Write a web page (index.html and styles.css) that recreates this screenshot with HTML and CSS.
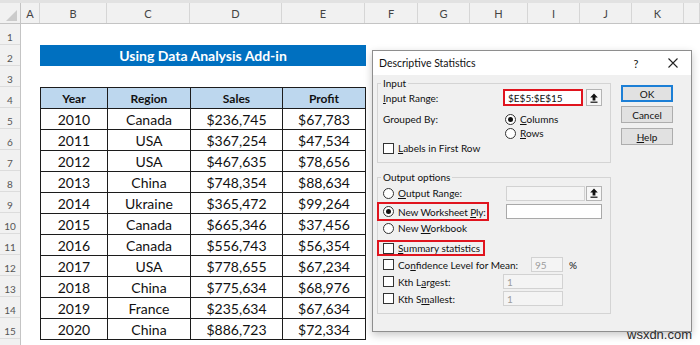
FILE: index.html
```html
<!DOCTYPE html>
<html lang="en">
<head>
  <meta charset="UTF-8">
  <title>Descriptive Statistics</title>
  <link rel="stylesheet" href="styles.css">
</head>
<body>

<div class="topstrip"></div>
<div class="colhead">
  <div class="corner"><span class="tri"></span></div>
  <div>A</div><div>B</div><div>C</div><div>D</div><div>E</div><div>F</div>
  <div>G</div><div>H</div><div>I</div><div>J</div><div>K</div><div></div>
</div>

<div class="sheet">
  <div class="rownums">
    <div>1</div><div>2</div><div>3</div><div>4</div><div>5</div><div>6</div><div>7</div><div>8</div>
    <div>9</div><div>10</div><div>11</div><div>12</div><div>13</div><div>14</div><div>15</div><div></div>
  </div>
  <div class="cells">
    <div class="spacer"></div>
    <div class="banner">Using Data Analysis Add-in</div>
    <div class="spacer"></div>
    <div class="data">
      <div class="th">Year</div><div class="th">Region</div><div class="th">Sales</div><div class="th">Profit</div>
      <div>2010</div><div>Canada</div><div>$236,745</div><div>$67,783</div>
      <div>2011</div><div>USA</div><div>$367,254</div><div>$47,534</div>
      <div>2012</div><div>USA</div><div>$467,635</div><div>$78,656</div>
      <div>2013</div><div>China</div><div>$748,354</div><div>$88,634</div>
      <div>2014</div><div>Ukraine</div><div>$365,472</div><div>$99,264</div>
      <div>2015</div><div>Canada</div><div>$665,346</div><div>$37,456</div>
      <div>2016</div><div>Canada</div><div>$556,743</div><div>$56,354</div>
      <div>2017</div><div>USA</div><div>$778,655</div><div>$67,234</div>
      <div>2018</div><div>China</div><div>$775,634</div><div>$68,976</div>
      <div>2019</div><div>France</div><div>$235,634</div><div>$67,634</div>
      <div>2020</div><div>China</div><div>$886,723</div><div>$72,334</div>
    </div>
  </div>
</div>

<div class="dialog">
  <div class="titlebar">
    <span class="title">Descriptive Statistics</span>
    <span class="help-q">?</span>
    <svg class="close" width="10" height="10" viewBox="0 0 10 10"><path d="M0.5 0.5L9.5 9.5M9.5 0.5L0.5 9.5" stroke="#222" stroke-width="1.1" fill="none"/></svg>
  </div>
  <div class="dlg-body">
    <div class="groups">
      <fieldset class="grp grp-input">
        <legend>Input</legend>
        <div class="line range">
          <span class="lbl w-range"><u>I</u>nput Range:</span>
          <span class="field ref">$E$5:$E$15</span>
          <span class="pick"><svg width="8" height="10" viewBox="0 0 8 10"><path d="M4 0.5L7.8 4.6H5.4V7.4H2.6V4.6H0.2Z" fill="#111"/><rect x="0.5" y="8.6" width="7" height="1.2" fill="#111"/></svg></span>
        </div>
        <div class="line grouped">
          <span class="lbl w-grouped">Grouped By:</span>
          <div class="radios">
            <div class="opt"><span class="radio on"></span><span><u>C</u>olumns</span></div>
            <div class="opt"><span class="radio"></span><span><u>R</u>ows</span></div>
          </div>
        </div>
        <div class="line first-row">
          <span class="check"></span><span><u>L</u>abels in First Row</span>
        </div>
      </fieldset>

      <fieldset class="grp grp-output">
        <legend>Output options</legend>
        <div class="line r-out">
          <span class="lbl w-out"><span class="radio"></span><span><u>O</u>utput Range:</span></span>
          <span class="field off w-outfield"></span>
          <span class="pick pick-out"><svg width="8" height="10" viewBox="0 0 8 10"><path d="M4 0.5L7.8 4.6H5.4V7.4H2.6V4.6H0.2Z" fill="#111"/><rect x="0.5" y="8.6" width="7" height="1.2" fill="#111"/></svg></span>
        </div>
        <div class="line r-ply">
          <span class="mark mark-ply"><span class="radio on"></span><span>New Worksheet <u>P</u>ly:</span></span>
          <span class="field w-ply"></span>
        </div>
        <div class="line r-book">
          <span class="radio"></span><span>New <u>W</u>orkbook</span>
        </div>
        <div class="line r-sum">
          <span class="mark mark-sum"><span class="check"></span><span><u>S</u>ummary statistics</span></span>
        </div>
        <div class="line r-conf">
          <span class="lbl w-conf"><span class="check"></span><span>Co<u>n</u>fidence Level for Mean:</span></span>
          <span class="field off w-small">95</span>
          <span class="pct">%</span>
        </div>
        <div class="line r-kth">
          <span class="lbl w-kth"><span class="check"></span><span>Kth L<u>a</u>rgest:</span></span>
          <span class="field off w-kthfield">1</span>
        </div>
        <div class="line r-kth">
          <span class="lbl w-kth"><span class="check"></span><span>Kth S<u>m</u>allest:</span></span>
          <span class="field off w-kthfield">1</span>
        </div>
      </fieldset>
    </div>

    <div class="buttons">
      <button class="btn default">OK</button>
      <button class="btn">Cancel</button>
      <button class="btn btn-help"><u>H</u>elp</button>
    </div>
  </div>
</div>

<div class="watermark">wsxdn.com</div>

</body>
</html>
```

FILE: styles.css
```css
body { margin: 0; width: 700px; height: 345px; overflow: hidden; position: relative; background: #fff; font-family: Lato, "Liberation Sans", sans-serif; color: #000; }

/* sheet frame */
.topstrip { height: 3px; background: #e2e2e2; }
.colhead { display: grid; grid-template-columns: 21px 19px 67px 83px 92px 83px 53px 52px 58px 52px 52px 52px 1fr; height: 21px; box-sizing: border-box; background: #f1f1f1; border-bottom: 1px solid #c4c4c4; }
.colhead > div { display: flex; align-items: center; justify-content: center; border-right: 1px solid #d6d6d6; color: #444; font-size: 11px; }
.colhead .corner { align-items: flex-end; justify-content: flex-end; padding: 0 3px 2px 0; border-right-color: #c4c4c4; }
.tri { width: 0; height: 0; border-left: 11px solid transparent; border-bottom: 11px solid #cbcbcb; }
.sheet { display: flex; }
.rownums { width: 21px; flex: none; background: #f1f1f1; border-right: 1px solid #c4c4c4; box-sizing: border-box; }
.rownums div { height: 21px; box-sizing: border-box; border-bottom: 1px solid #dcdcdc; padding-top: 7px; line-height: 12px; font-size: 10px; color: #555; text-align: center; }
.cells { padding-left: 19px; }
.spacer { height: 21px; }
.banner { width: 326px; height: 21px; display: flex; align-items: center; justify-content: center; background: #0070c0; color: #fff; font-weight: 700; font-size: 14px; }
.data { display: grid; grid-template-columns: 67px 83px 92px 83px; width: 326px; box-sizing: border-box; border-left: 1px solid #1c1c1c; border-top: 1px solid #1c1c1c; }
.data > div { height: 21px; box-sizing: border-box; display: flex; align-items: center; justify-content: center; border-right: 1px solid #1c1c1c; border-bottom: 1px solid #1c1c1c; font-size: 14px; color: #111; }
.data .th { background: #bdd7ee; font-weight: 700; font-size: 12px; }

/* dialog */
.dialog { position: absolute; left: 372px; top: 50px; width: 320px; height: 282px; box-sizing: border-box; border: 1px solid #8e8e8e; background: #f0f0f0; box-shadow: 0 3px 8px rgba(0,0,0,.22); font-size: 10px; color: #111; white-space: nowrap; }
.titlebar { height: 24px; display: flex; align-items: center; padding-left: 6px; background: #fff; font-size: 10.5px; }
.help-q { margin-left: auto; width: 10px; text-align: center; font-size: 11px; }
.close { margin-left: 27px; margin-right: 13px; }
.dlg-body { display: flex; padding: 2px 0 0 4px; }
.groups { width: 234px; display: flex; flex-direction: column; gap: 8px; }
.grp { margin: 0; padding: 0 0 7px 5px; border: 1px solid #d4d4d4; min-width: 0; }
.grp legend { padding: 0 2px; margin-left: -2px; line-height: 12px; }
.line { display: flex; align-items: center; }
.lbl { display: flex; align-items: center; flex: none; }
.field { box-sizing: border-box; height: 15px; display: flex; align-items: center; padding-left: 3px; background: #fff; border: 1px solid #a9a9a9; flex: none; }
.field.off { background: #f4f4f4; border-color: #d2d2d2; color: #9c9c9c; }
.pick { box-sizing: border-box; width: 16px; height: 15px; display: flex; align-items: center; justify-content: center; background: #f7f7f7; border: 1px solid #b4b4b4; flex: none; }
.radio { box-sizing: border-box; width: 11px; height: 11px; border: 1px solid #333; border-radius: 50%; background: #fff; flex: none; margin-right: 4px; display: flex; align-items: center; justify-content: center; }
.radio.on::after { content: ""; width: 5px; height: 5px; border-radius: 50%; background: #111; }
.check { box-sizing: border-box; width: 11px; height: 11px; border: 1px solid #333; background: #fff; flex: none; margin-right: 4px; }
.mark { display: flex; align-items: center; box-sizing: border-box; margin-left: -6px; padding-left: 4px; border: 2px solid #e0141e; flex: none; }

.range { height: 17px; }
.w-range { width: 120px; }
.range .ref { width: 80px; height: 17px; border: 2px solid #e0141e; }
.range .pick { height: 17px; margin-left: 3px; }
.grouped { margin-top: 6px; align-items: flex-start; }
.grouped .lbl { height: 14px; }
.w-grouped { width: 122px; }
.opt { height: 14px; display: flex; align-items: center; }
.first-row { height: 14px; margin-top: 1px; }

.r-out { height: 16px; margin-top: 2px; }
.w-out { width: 123px; }
.w-outfield { width: 79px; }
.pick-out { margin-left: 1px; }
.r-ply { height: 19px; margin-top: 1px; }
.mark-ply { width: 112px; height: 19px; letter-spacing: -0.1px; }
.w-ply { width: 96px; margin-left: 17px; }
.r-book { height: 14px; }
.r-sum { height: 16px; margin-top: 5px; }
.mark-sum { width: 108px; height: 16px; }
.r-conf { height: 15px; margin-top: 1px; }
.w-conf { width: 148px; }
.w-small { width: 32px; }
.pct { margin-left: 6px; }
.r-kth { height: 15px; margin-top: 2px; }
.w-kth { width: 120px; }
.w-kthfield { width: 60px; }

.buttons { width: 52px; margin-left: 10px; padding-top: 8px; display: flex; flex-direction: column; gap: 4px; }
.btn { box-sizing: border-box; height: 17px; padding: 0; border: 1px solid #adadad; background: #e1e1e1; font: inherit; color: #111; }
.btn.default { border: 2px solid #1c7fd6; }
.btn-help { margin-top: 1px; }

.watermark { position: absolute; left: 627px; top: 327px; font: 13px "Liberation Sans", Arial, sans-serif; color: #2a2a2a; }
```
